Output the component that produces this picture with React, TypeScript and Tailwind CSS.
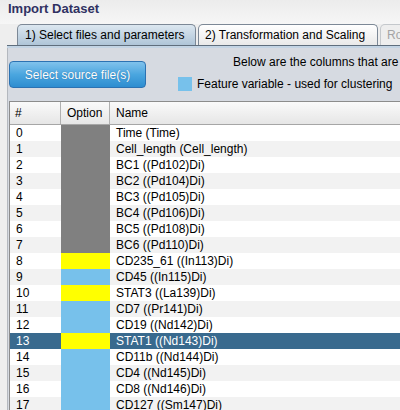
import React from 'react';

type Row = { id: number; name: string; option: 'none' | 'yellow' | 'blue' };

const rows: Row[] = [
  { id: 0, name: 'Time (Time)', option: 'none' },
  { id: 1, name: 'Cell_length (Cell_length)', option: 'none' },
  { id: 2, name: 'BC1 ((Pd102)Di)', option: 'none' },
  { id: 3, name: 'BC2 ((Pd104)Di)', option: 'none' },
  { id: 4, name: 'BC3 ((Pd105)Di)', option: 'none' },
  { id: 5, name: 'BC4 ((Pd106)Di)', option: 'none' },
  { id: 6, name: 'BC5 ((Pd108)Di)', option: 'none' },
  { id: 7, name: 'BC6 ((Pd110)Di)', option: 'none' },
  { id: 8, name: 'CD235_61 ((In113)Di)', option: 'yellow' },
  { id: 9, name: 'CD45 ((In115)Di)', option: 'blue' },
  { id: 10, name: 'STAT3 ((La139)Di)', option: 'yellow' },
  { id: 11, name: 'CD7 ((Pr141)Di)', option: 'blue' },
  { id: 12, name: 'CD19 ((Nd142)Di)', option: 'blue' },
  { id: 13, name: 'STAT1 ((Nd143)Di)', option: 'yellow' },
  { id: 14, name: 'CD11b ((Nd144)Di)', option: 'blue' },
  { id: 15, name: 'CD4 ((Nd145)Di)', option: 'blue' },
  { id: 16, name: 'CD8 ((Nd146)Di)', option: 'blue' },
  { id: 17, name: 'CD127 ((Sm147)Di)', option: 'blue' },
];

const SELECTED = 13;

const optionClass = (o: Row['option']) =>
  o === 'none' ? 'bg-[#808080]' : o === 'yellow' ? 'bg-[#ffff00]' : 'bg-[#77c1eb]';

const App: React.FC = () => {
  return (
    <div
      className="w-[400px] h-[410px] overflow-hidden bg-[#eeeeee] text-[12px] text-black"
      style={{ fontFamily: '"Liberation Sans", Arial, sans-serif' }}
    >
      {/* title */}
      <div className="h-[24px] bg-gradient-to-b from-[#ececec] to-[#f6f6f6] pl-[8px] pt-[1px] text-[13px] font-bold leading-[16px] text-[#2f3162]">
        Import Dataset
      </div>

      <div className="ml-[7px]">
        {/* tabs */}
        <div className="flex h-[21px] items-end gap-[2px] pl-[10px] whitespace-nowrap">
          <div className="flex h-[21px] w-[179px] shrink-0 items-center rounded-t-[5px] border border-b-0 border-[#7c8896] bg-gradient-to-b from-[#dce7f0] to-[#afc5d8] pl-[7px] leading-none">
            1) Select files and parameters
          </div>
          <div className="flex h-[21px] w-[180px] shrink-0 items-center rounded-t-[5px] border border-b-0 border-[#7c8896] bg-gradient-to-b from-[#ffffff] to-[#e9e9e9] pl-[6px] leading-none">
            2) Transformation and Scaling
          </div>
          <div className="flex h-[21px] w-[60px] shrink-0 items-center rounded-t-[5px] border border-b-0 border-[#c4c8cc] bg-[#eeeeee] pl-[6px] leading-none text-[#a4a4a4]">
            Ro
          </div>
        </div>
        <div className="h-px bg-[#5f6e7d]" />
        <div className="h-[2px] bg-[#c3d4e4]" />

        {/* panel */}
        <div className="h-[400px] border-l border-[#b4b8be] bg-[#d6dae1]">
          <div className="flex h-[53px] whitespace-nowrap">
            <div className="ml-[1px] mt-[13px] flex h-[27px] w-[137px] shrink-0 items-center justify-center rounded-[4px] border border-[#2c72b2] bg-gradient-to-b from-[#80c2ec] via-[#4aa6df] to-[#2d8dd0] text-white [text-shadow:0_0_1px_rgba(0,40,90,0.5)]">
              Select source file(s)
            </div>
            <div className="flex-1 pt-[7px]">
              <div className="h-[15px] pl-[87px] leading-[15px]">Below are the columns that are</div>
              <div className="mt-[7px] flex h-[14px] items-center pl-[32px]">
                <div className="h-[14px] w-[14px] shrink-0 bg-[#77c1eb]" />
                <span className="ml-[5px] leading-[14px]">Feature variable - used for clustering</span>
              </div>
            </div>
          </div>

          {/* table */}
          <div className="ml-[1px] border-l border-t border-[#8c8c8c] bg-white whitespace-nowrap">
            <div className="flex h-[23px] border-b border-[#a6a6a6] bg-gradient-to-b from-[#fafafa] to-[#e6e6e6]">
              <div className="flex w-[51px] shrink-0 items-center border-r border-[#b0b0b0] pl-[5px]">#</div>
              <div className="flex w-[49px] shrink-0 items-center border-r border-[#b0b0b0] pl-[6px]">Option</div>
              <div className="flex flex-1 items-center pl-[6px]">Name</div>
            </div>
            {rows.map((r) => {
              const sel = r.id === SELECTED;
              const rowBg = sel ? 'bg-[#396a8e] text-white' : r.id % 2 === 1 ? 'bg-[#f2f2f2]' : 'bg-white';
              return (
                <div key={r.id} className={`flex h-[16px] leading-[16px] ${rowBg}`}>
                  <div className="w-[51px] shrink-0 pl-[6px]">{r.id}</div>
                  <div className={`w-[49px] shrink-0 ${optionClass(r.option)}`} />
                  <div className="flex-1 pl-[6px]">{r.name}</div>
                </div>
              );
            })}
          </div>
        </div>
      </div>
    </div>
  );
};

export default App;
